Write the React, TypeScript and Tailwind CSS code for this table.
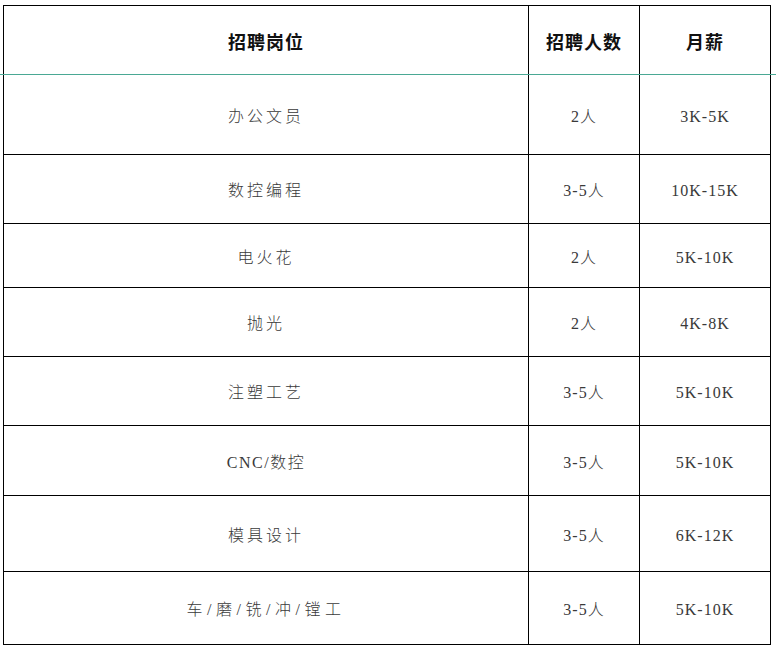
import React from "react";

const rows: { name: string; count: string; pay: string; h: number; t: string }[] = [
  { name: "办公文员", count: "2人", pay: "3K-5K", h: 79, t: "tracking-[3px]" },
  { name: "数控编程", count: "3-5人", pay: "10K-15K", h: 69, t: "tracking-[3px]" },
  { name: "电火花", count: "2人", pay: "5K-10K", h: 64, t: "tracking-[3px]" },
  { name: "抛光", count: "2人", pay: "4K-8K", h: 69, t: "tracking-[3px]" },
  { name: "注塑工艺", count: "3-5人", pay: "5K-10K", h: 69, t: "tracking-[3px]" },
  { name: "CNC/数控", count: "3-5人", pay: "5K-10K", h: 70, t: "tracking-[1.5px]" },
  { name: "模具设计", count: "3-5人", pay: "6K-12K", h: 76, t: "tracking-[3px]" },
  { name: "车/磨/铣/冲/镗工", count: "3-5人", pay: "5K-10K", h: 73, t: "tracking-[4.5px]" },
];

const body = { fontFamily: '"Liberation Serif", "Noto Sans CJK SC", serif' };
const head = { fontFamily: '"Noto Sans CJK SC", "Noto Sans", sans-serif' };

export default function App() {
  return (
    <div className="w-[776px] h-[649px] bg-white overflow-hidden pt-[5px]">
      {/* header */}
      <div className="ml-[3px] w-[768px] grid grid-cols-[524px_111px_131px] border-t border-black border-l border-r h-[69px]" style={head}>
        <div className="flex items-center justify-center pt-[3px] text-[18px] font-bold tracking-[1px] text-[#111]">招聘岗位</div>
        <div className="flex items-center justify-center pt-[3px] text-[18px] font-bold tracking-[1px] text-[#111] border-l border-black">招聘人数</div>
        <div className="flex items-center justify-center pt-[3px] text-[18px] font-bold tracking-[1px] text-[#111] border-l border-black">月薪</div>
      </div>
      <div className="w-full h-px bg-[#4aa894]" />
      <div className="ml-[3px] w-[768px] border-l border-r border-black">
        {rows.map((r, i) => (
          <div
            key={i}
            className={`grid grid-cols-[524px_111px_131px] ${i > 0 ? "border-t border-black" : ""}`}
            style={{ height: r.h, ...body }}
          >
            <div className={`flex items-center justify-center pt-[4px] text-[16px] font-light text-[#3a3a3a] ${r.t}`}>{r.name}</div>
            <div className="flex items-center justify-center pt-[4px] text-[16px] font-light tracking-[1px] text-[#3a3a3a] border-l border-black">{r.count}</div>
            <div className="flex items-center justify-center pt-[4px] text-[16px] font-light tracking-[1px] text-[#3a3a3a] border-l border-black">{r.pay}</div>
          </div>
        ))}
        <div className="border-t border-black" />
      </div>
    </div>
  );
}
